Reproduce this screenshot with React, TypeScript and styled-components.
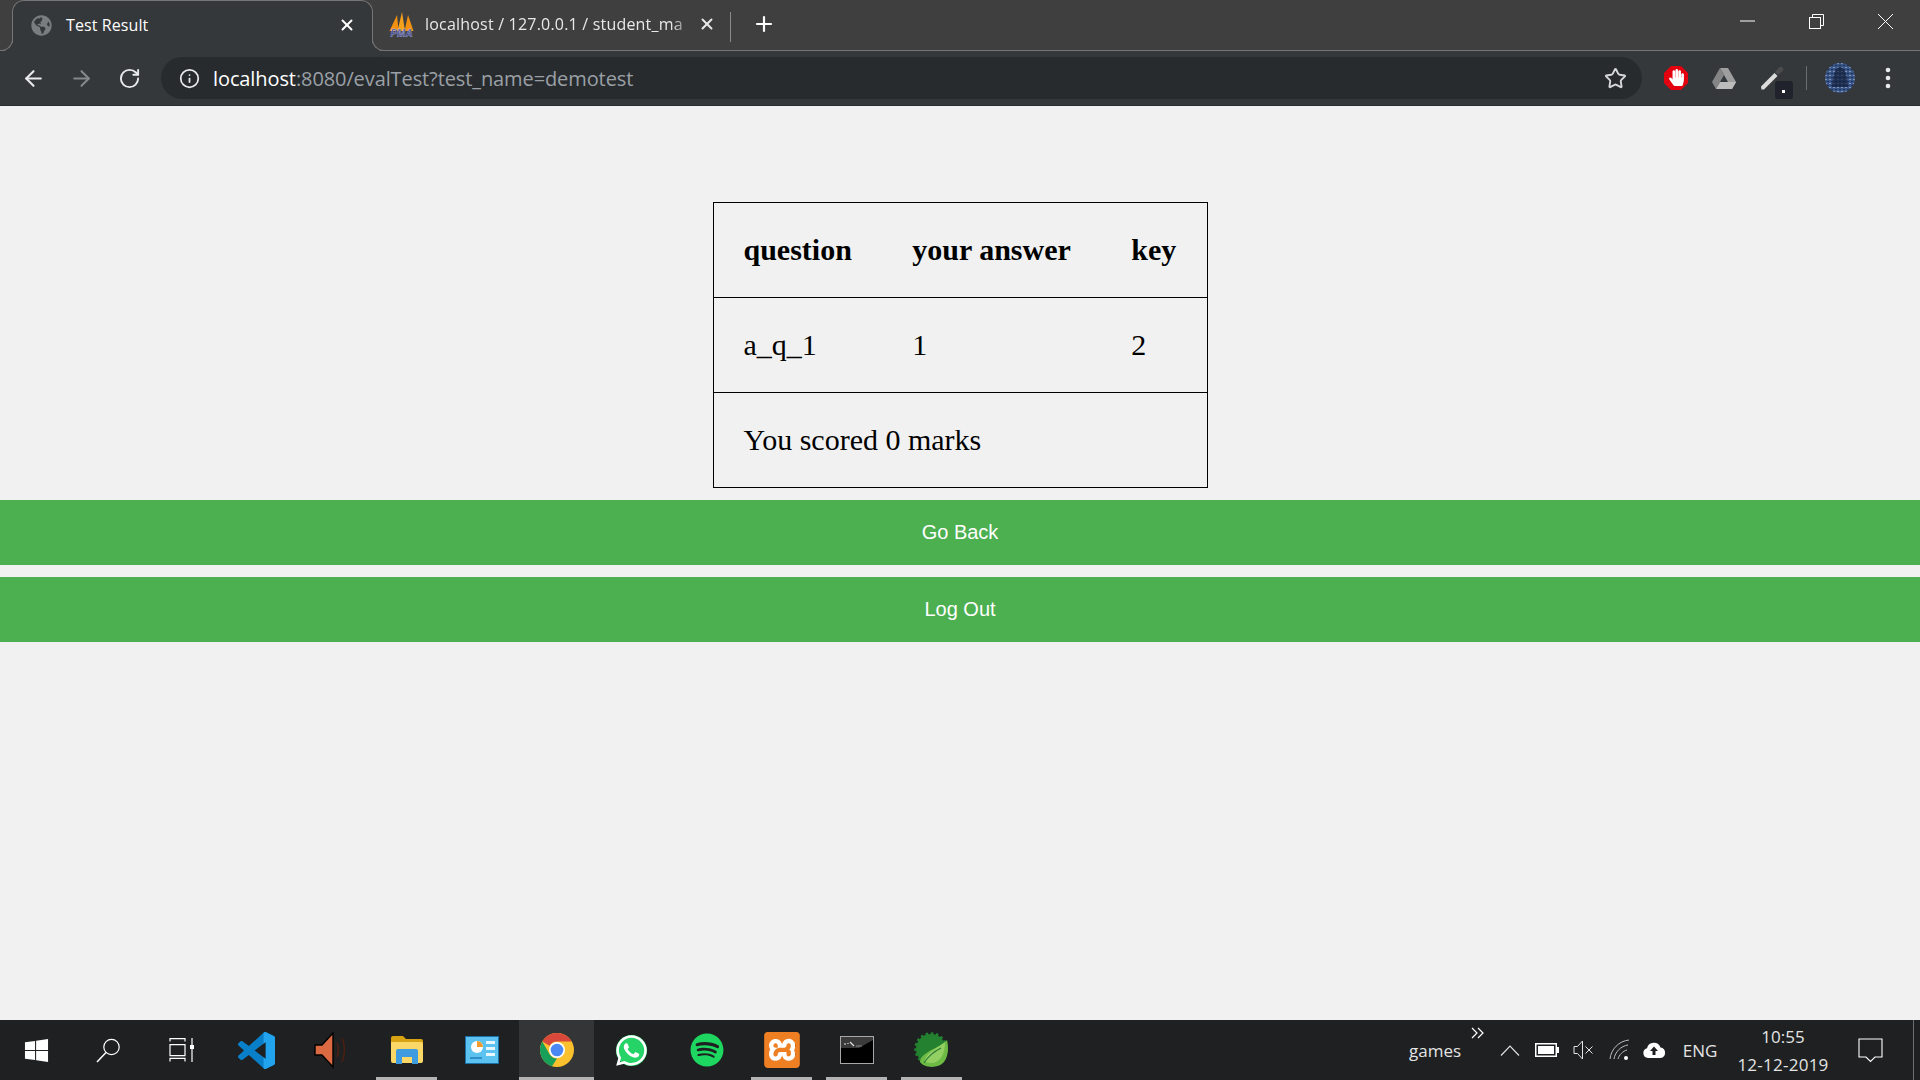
import React from "react";
import styled, { createGlobalStyle } from "styled-components";
import { ArrowLeft, ArrowRight, RotateCw, Info, Star, X, Plus } from "lucide-react";
import { FaHandPaper, FaWhatsapp, FaSpotify, FaGlobeAmericas } from "react-icons/fa";
import { SiXampp } from "react-icons/si";

const GlobalStyle = createGlobalStyle`
  html, body { margin: 0; padding: 0; height: 100%; background: #f1f1f1; }
  * { box-sizing: border-box; }
`;

const Screen = styled.div`
  width: 1920px;
  height: 1080px;
  display: flex;
  flex-direction: column;
  overflow: hidden;
`;

/* browser chrome */
const TabStrip = styled.div`
  height: 51px;
  flex: none;
  display: flex;
  align-items: flex-end;
  padding-left: 12px;
  background: #3f3f3f;
  border-bottom: 1px solid #757575;
  color: #fff;
  font-family: "Open Sans", sans-serif;
  font-size: 16px;
`;

const ActiveTab = styled.div`
  position: relative;
  width: 361px;
  height: 51px;
  margin-bottom: -1px;
  display: flex;
  align-items: center;
  padding: 0 16px 2px 18px;
  background: #35383b;
  border: 1px solid #757575;
  border-bottom: none;
  border-radius: 12px 12px 0 0;

  &::before,
  &::after {
    content: "";
    position: absolute;
    bottom: 0;
    width: 13px;
    height: 13px;
    border-bottom: 1px solid #757575;
  }
  &::before {
    left: -14px;
    border-right: 1px solid #757575;
    border-bottom-right-radius: 12px;
    box-shadow: 6px 6px 0 #35383b;
  }
  &::after {
    right: -14px;
    border-left: 1px solid #757575;
    border-bottom-left-radius: 12px;
    box-shadow: -6px 6px 0 #35383b;
  }
`;

const Tab = styled.div`
  width: 357px;
  height: 50px;
  display: flex;
  align-items: center;
  padding: 0 14px 2px 16px;
  color: #e8e8e8;
`;

const TabTitle = styled.span<{ $fade?: boolean }>`
  flex: 1;
  margin-left: ${(p) => (p.$fade ? 11 : 14)}px;
  white-space: nowrap;
  letter-spacing: ${(p) => (p.$fade ? 0.2 : 0.1)}px;
  ${(p) => p.$fade && "-webkit-mask-image: linear-gradient(90deg, #000 90%, transparent 99%);"}
`;

const TabDivider = styled.div`
  width: 1px;
  height: 30px;
  margin-bottom: 8px;
  background: #8a8a8a;
`;

const NewTab = styled.div`
  width: 66px;
  height: 50px;
  display: flex;
  align-items: center;
  justify-content: center;
  padding-bottom: 2px;
`;

const WindowControls = styled.div`
  margin-left: auto;
  height: 50px;
  display: flex;
  align-items: flex-start;
`;

const WindowButton = styled.div`
  width: 69px;
  height: 42px;
  display: flex;
  align-items: center;
  justify-content: center;
`;

const Toolbar = styled.div`
  height: 55px;
  flex: none;
  display: flex;
  align-items: center;
  background: #35383b;
  border-bottom: 1px solid #2b2d30;
  padding-left: 9px;
`;

const NavButton = styled.div<{ $off?: boolean }>`
  width: 48px;
  height: 42px;
  display: flex;
  align-items: center;
  justify-content: center;
  color: ${(p) => (p.$off ? "#85888b" : "#e8eaed")};
`;

const Omnibox = styled.div`
  width: 1481px;
  margin-right: 10px;
  height: 42px;
  margin-left: 8px;
  display: flex;
  align-items: center;
  padding: 0 15px 0 18px;
  background: #282b2e;
  border-radius: 21px;
  font-family: "Open Sans", sans-serif;
  font-size: 20px;
  color: #9aa0a6;
`;

const Url = styled.div`
  flex: 1;
  margin-left: 13px;
  letter-spacing: -0.1px;
  white-space: nowrap;
`;

const Host = styled.span`
  color: #fff;
`;

const ToolbarSlot = styled.div<{ $w: number }>`
  width: ${(p) => p.$w}px;
  height: 42px;
  flex: none;
  position: relative;
  display: flex;
  align-items: center;
  justify-content: center;
  color: #e8eaed;
`;

const ToolbarDivider = styled.div`
  width: 1px;
  height: 24px;
  background: #6b6e71;
`;

const PickerBadge = styled.div`
  position: absolute;
  right: 3px;
  bottom: 0;
  width: 18px;
  height: 18px;
  border-radius: 3px;
  background: #20232b;
  &::after {
    content: "";
    position: absolute;
    left: 7px;
    top: 9px;
    width: 3px;
    height: 3px;
    background: #fff;
  }
`;

/* page */
const Page = styled.main`
  flex: 1;
  display: flex;
  flex-direction: column;
  align-items: center;
  gap: 12px;
  padding-top: 96px;
  background: #f1f1f1;
`;

const ResultTable = styled.table`
  width: 495px;
  border-collapse: collapse;
  border: 1px solid #000;
  font-family: "Liberation Serif", "Times New Roman", serif;
  font-size: 30px;
  color: #000;
  text-align: left;
`;

const Row = styled.tr`
  height: 95px;
  border-bottom: 1px solid #000;
  &:last-child { border-bottom: none; }
`;

const HeadCell = styled.th`
  padding: 0 30px;
  font-weight: 700;
  white-space: nowrap;
`;

const Cell = styled.td`
  padding: 0 30px;
`;

const WideButton = styled.button`
  width: 100%;
  height: 65px;
  flex: none;
  border: none;
  background: #4caf50;
  color: #fff;
  font-family: "Liberation Sans", Arial, sans-serif;
  font-size: 20px;
`;

/* taskbar */
const Taskbar = styled.footer`
  height: 60px;
  flex: none;
  display: flex;
  background: #1e2022;
`;

const TaskSlot = styled.div<{ $w?: number; $open?: boolean; $active?: boolean }>`
  width: ${(p) => p.$w ?? 75}px;
  flex: none;
  position: relative;
  display: flex;
  align-items: center;
  justify-content: center;
  color: #fff;
  background: ${(p) => (p.$active ? "#333536" : "transparent")};
  ${(p) =>
    p.$open &&
    `&::after {
      content: "";
      position: absolute;
      bottom: 0;
      left: ${p.$active ? 0 : 7}px;
      right: ${p.$active ? 0 : 7}px;
      height: 3px;
      background: #b3b3b3;
    }`}
`;

const WhatsappBadge = styled.div`
  position: relative;
  display: flex;
  &::before {
    content: "";
    position: absolute;
    inset: 2px;
    border-radius: 50%;
    background: #25d366;
  }
  svg { position: relative; }
`;

const XamppBadge = styled.div`
  position: relative;
  display: flex;
  &::before {
    content: "";
    position: absolute;
    inset: 5px;
    background: #fff;
  }
  svg { position: relative; }
`;

const Tray = styled.div`
  margin-left: auto;
  display: flex;
  color: #fff;
  font-family: "Open Sans", sans-serif;
`;

const TraySlot = styled.div<{ $w: number; $top?: boolean }>`
  width: ${(p) => p.$w}px;
  display: flex;
  align-items: ${(p) => (p.$top ? "flex-start" : "center")};
  justify-content: center;
  padding-top: ${(p) => (p.$top ? 7 : 0)}px;
  font-size: 17px;
  color: #e4e4e4;
`;

const Clock = styled.div`
  width: 102px;
  display: flex;
  flex-direction: column;
  align-items: center;
  justify-content: space-between;
  padding: 5px 0 4px;
  font-size: 17px;
  color: #e4e4e4;
`;

const DateText = styled.span`
  letter-spacing: 0.25px;
`;

const ShowDesktop = styled.div`
  width: 14px;
  display: flex;
  justify-content: center;
  &::before {
    content: "";
    width: 1px;
    background: #6d6d6d;
  }
`;

const WindowsLogo = () => (
  <svg width="25" height="25" viewBox="0 0 26 26" fill="#fff">
    <polygon points="1,4.5 11.5,3 11.5,12.4 1,12.4" />
    <polygon points="12.6,2.8 25,1 25,12.4 12.6,12.4" />
    <polygon points="1,13.6 11.5,13.6 11.5,23 1,21.5" />
    <polygon points="12.6,13.6 25,13.6 25,25 12.6,23.2" />
  </svg>
);

const SearchGlass = () => (
  <svg width="25" height="25" viewBox="0 0 25 25" fill="none" stroke="#fff">
    <circle cx="15.5" cy="9" r="7.7" strokeWidth="1.2" />
    <path d="M10 14.5L1 24" strokeWidth="1.5" />
  </svg>
);

const TaskView = () => (
  <svg width="26" height="24" viewBox="0 0 26 24" fill="none" stroke="#fff" strokeWidth="1.2">
    <path d="M1 3.5V.6h15v2.9M1 6.6h15v11H1zM1 23.4v-3h15v3" />
    <path d="M23 0v24" />
    <rect x="21" y="7" width="4" height="4" fill="#fff" stroke="none" />
  </svg>
);

const VS_PATH =
  "M23.15 2.587L18.21.21a1.494 1.494 0 0 0-1.705.29l-9.46 8.63-4.12-3.128a.999.999 0 0 0-1.276.057L.327 7.261A1 1 0 0 0 .326 8.74L3.899 12 .326 15.26a1 1 0 0 0 .001 1.479L1.65 17.94a.999.999 0 0 0 1.276.057l4.12-3.128 9.46 8.63a1.492 1.492 0 0 0 1.704.29l4.942-2.377A1.5 1.5 0 0 0 24 20.06V3.939a1.5 1.5 0 0 0-.85-1.352zm-5.146 14.861L10.826 12l7.178-5.448v10.896z";

const VsCode = () => (
  <svg width="37" height="37" viewBox="0 0 24 24">
    <defs>
      <clipPath id="vsRight">
        <rect x="16.6" y="0" width="8" height="24" />
      </clipPath>
    </defs>
    <path d={VS_PATH} fill="#0a7fc9" />
    <path d={VS_PATH} fill="#22a3ee" clipPath="url(#vsRight)" />
  </svg>
);

const Speaker = () => (
  <svg width="36" height="38" viewBox="0 0 36 38">
    <path d="M1 14h7L19 2v34L8 24H1z" fill="#db6a42" stroke="#000" strokeWidth="1.4" />
    <path d="M23 12q3 7 0 14M28 7q5 12 0 24" fill="none" stroke="#4a2010" strokeWidth="1.6" />
  </svg>
);

const Folder = () => (
  <svg width="34" height="30" viewBox="0 0 34 30">
    <path d="M1 3q0-2 2-2h10l3 3h15q2 0 2 2v4H1z" fill="#d9a213" />
    <path d="M1 7h30q2 0 2 2v17q0 2-2 2H3q-2 0-2-2z" fill="#fbd768" />
    <path d="M6 16q0-2 2-2h18q2 0 2 2v13h-6v-7h-10v7H6z" fill="#3f9be0" />
  </svg>
);

const ControlPanel = () => (
  <svg width="34" height="28" viewBox="0 0 34 28">
    <rect x="0.5" y="0.5" width="33" height="27" fill="#5cc2ef" stroke="#1b6fa8" />
    <circle cx="12" cy="11" r="6" fill="#fff" />
    <path d="M12 11V5a6 6 0 0 1 6 6z" fill="#f39c2e" />
    <rect x="21" y="5" width="9" height="3" fill="#e8f6fd" />
    <rect x="21" y="11" width="9" height="3" fill="#e8f6fd" />
    <rect x="21" y="17" width="9" height="3" fill="#e8f6fd" />
    <rect x="5" y="21" width="12" height="2" fill="#2f8fc9" />
  </svg>
);

const Chrome = () => (
  <svg width="34" height="34" viewBox="0 0 34 34">
    <circle cx="17" cy="17" r="17" fill="#fbc02d" />
    <path d="M17 0A17 17 0 0 1 31.7 8.5H17A8.5 8.5 0 0 0 9.6 12.8L2.3 8.5A17 17 0 0 1 17 0Z" fill="#d9483b" />
    <path d="M2.3 8.5L9.6 21.3A8.5 8.5 0 0 0 17 25.5L12 33.3A17 17 0 0 1 2.3 8.5Z" fill="#189f5a" />
    <circle cx="17" cy="17" r="8" fill="#fff" />
    <circle cx="17" cy="17" r="6.3" fill="#4a89f3" />
  </svg>
);

const CmdWindow = () => (
  <svg width="34" height="28" viewBox="0 0 34 28">
    <rect x="0.5" y="0.5" width="33" height="27" fill="#000" stroke="#a8a8a8" />
    <path d="M1 1h32v3l-14 8H1z" fill="#3a3a3a" />
    <path d="M4 8h2M8 7v1M10 6l4 4" stroke="#ddd" strokeWidth="1.2" />
    <path d="M16 10h6" stroke="#888" />
  </svg>
);

const SpringBoot = () => (
  <svg width="36" height="36" viewBox="0 0 36 36">
    <circle cx="17" cy="17" r="15" fill="#23812f" stroke="#23812f" strokeWidth="3.5" strokeDasharray="2.5 2.5" />
    <path d="M6 30C10 36 24 37 30 30 34 25 35 16 33 8 28 14 20 16 14 20 9 23 6 26 6 30Z" fill="#6dbb45" />
    <path d="M11 29C11 21 22 17 31 10 31 21 27 31 17 31 14 31 12 30 11 29Z" fill="#93cf63" />
    <path d="M10 31C15 23 21 19 27 16" stroke="#2a7d36" strokeWidth="1.2" fill="none" />
  </svg>
);

const OverflowChevrons = () => (
  <svg width="16" height="12" viewBox="0 0 16 12" fill="none" stroke="#fff" strokeWidth="1.2">
    <path d="M1 1l5 5-5 5M7 1l5 5-5 5" />
  </svg>
);

const TrayChevron = () => (
  <svg width="20" height="11" viewBox="0 0 20 11" fill="none" stroke="#e4e4e4" strokeWidth="1.1">
    <path d="M1 10.5L10 1l9 9.5" />
  </svg>
);

const Battery = () => (
  <svg width="24" height="14" viewBox="0 0 24 14">
    <rect x="0.75" y="0.75" width="20.5" height="12.5" fill="none" stroke="#fff" strokeWidth="1.5" />
    <rect x="3" y="3" width="16" height="8" fill="#fff" />
    <rect x="22" y="4" width="2" height="6" fill="#fff" />
  </svg>
);

const MutedSpeaker = () => (
  <svg width="21" height="20" viewBox="0 0 21 20" fill="none" stroke="#e4e4e4" strokeWidth="1">
    <path d="M1 6.5h3.5L9.5 1v18l-5-5.5H1z" />
    <path d="M12.5 6.5l7 7M19.5 6.5l-7 7" />
  </svg>
);

const WifiArcs = () => (
  <svg width="22" height="22" viewBox="0 0 22 22" fill="none" stroke="#bdbdbd" strokeWidth="1">
    <path d="M1 20C2 10 10 2 20 1" />
    <path d="M5 20C6 13 12 7 19 6" />
    <path d="M9 20C10 16 14 12 18 11" />
    <circle cx="17" cy="19" r="2" fill="#fff" stroke="none" />
  </svg>
);

const CloudUp = () => (
  <svg width="24" height="16" viewBox="0 0 24 16">
    <path d="M6 16A5 5 0 0 1 5 6.2 7 7 0 0 1 18.5 5.5 5.3 5.3 0 0 1 18.5 16Z" fill="#fff" />
    <path d="M12 4.5l4 4.5h-2.5v4h-3V9H8z" fill="#1e2022" />
  </svg>
);

const Notifications = () => (
  <svg width="25" height="25" viewBox="0 0 25 25" fill="none" stroke="#fff" strokeWidth="1.1">
    <path d="M1 1h23v18h-7l-4.5 4.5L8 19H1z" />
  </svg>
);

const Pma = () => (
  <svg width="25" height="25" viewBox="0 0 25 25">
    <path d="M0.5 19L8 3l1.5 16z" fill="#f29111" />
    <path d="M8.5 19L13 0l3 19z" fill="#f6a21e" />
    <path d="M15.5 19L19 3l5.5 16z" fill="#f29111" />
    <text x="12.5" y="24.5" textAnchor="middle" fontFamily="Liberation Sans, sans-serif" fontSize="10" fontWeight="700" fontStyle="italic" fill="#39418f" stroke="#cfd3ea" strokeWidth="0.3">PMA</text>
  </svg>
);

const Drive = () => (
  <svg width="24" height="21" viewBox="0 0 24 21">
    <polygon points="8,0 16,0 24,14 20,21 12,7" fill="#9e9e9e" />
    <polygon points="8,0 12,7 4,21 0,14" fill="#858585" />
    <polygon points="8,14 24,14 20,21 4,21" fill="#bcbcbc" />
  </svg>
);

const Dropper = () => (
  <svg width="24" height="24" viewBox="0 0 24 24">
    <path d="M1 20.5L14.5 7l3 3L4 23.5 1.5 23.5z" fill="#dcdcdc" />
    <path d="M15 6l4-4.5a2.4 2.4 0 0 1 3.5 3.5L18 9z" fill="#4c4c4c" />
  </svg>
);

const Avatar = () => (
  <svg width="30" height="30" viewBox="0 0 30 30">
    <defs>
      <pattern id="grid" width="4" height="4" patternUnits="userSpaceOnUse">
        <rect width="4" height="4" fill="#3a5688" />
        <rect width="2" height="1" fill="#7f97bb" />
        <rect y="2" x="2" width="2" height="1" fill="#1d3158" />
      </pattern>
    </defs>
    <circle cx="15" cy="15" r="15" fill="url(#grid)" />
    <path d="M7 24C8 12 10 4 15 4s7 8 8 20z" fill="#14203c" opacity="0.7" />
  </svg>
);

const DotsMenu = () => (
  <svg width="6" height="22" viewBox="0 0 6 22" fill="#e8eaed">
    <circle cx="3" cy="3" r="2.3" />
    <circle cx="3" cy="11" r="2.3" />
    <circle cx="3" cy="19" r="2.3" />
  </svg>
);

const StopHand = () => (
  <svg width="24" height="24" viewBox="0 0 24 24">
    <polygon points="7,0 17,0 24,7 24,17 17,24 7,24 0,17 0,7" fill="#e3000f" />
    <foreignObject x="3.5" y="3" width="18" height="18">
      <FaHandPaper size={17} color="#fff" />
    </foreignObject>
  </svg>
);

const MinimizeGlyph = () => (
  <svg width="15" height="2" viewBox="0 0 15 2" stroke="#fff" strokeWidth="1">
    <path d="M0 1h15" />
  </svg>
);

const RestoreGlyph = () => (
  <svg width="15" height="15" viewBox="0 0 15 15" fill="none" stroke="#fff" strokeWidth="1">
    <rect x="0.5" y="3.5" width="11" height="11" />
    <path d="M3.5 3.5V0.5H14.5V11.5H11.5" />
  </svg>
);

const CloseGlyph = () => (
  <svg width="15" height="15" viewBox="0 0 15 15" stroke="#fff" strokeWidth="1">
    <path d="M0 0l15 15M15 0L0 15" />
  </svg>
);

const App = () => (
  <Screen>
    <GlobalStyle />
    <TabStrip>
      <ActiveTab>
        <FaGlobeAmericas size={21} color="#7a7d80" />
        <TabTitle>Test Result</TabTitle>
        <X size={18} strokeWidth={2.6} />
      </ActiveTab>
      <Tab>
        <Pma />
        <TabTitle $fade>localhost / 127.0.0.1 / student_ma</TabTitle>
        <X size={18} strokeWidth={2.6} />
      </Tab>
      <TabDivider />
      <NewTab>
        <Plus size={24} strokeWidth={2.2} />
      </NewTab>
      <WindowControls>
        <WindowButton>
          <MinimizeGlyph />
        </WindowButton>
        <WindowButton>
          <RestoreGlyph />
        </WindowButton>
        <WindowButton>
          <CloseGlyph />
        </WindowButton>
      </WindowControls>
    </TabStrip>

    <Toolbar>
      <NavButton>
        <ArrowLeft size={25} strokeWidth={2} />
      </NavButton>
      <NavButton $off>
        <ArrowRight size={25} strokeWidth={2} />
      </NavButton>
      <NavButton>
        <RotateCw size={23} strokeWidth={2} />
      </NavButton>
      <Omnibox>
        <Info size={21} strokeWidth={2} color="#e8eaed" />
        <Url>
          <Host>localhost</Host>:8080/evalTest?test_name=demotest
        </Url>
        <Star size={23} strokeWidth={2} color="#d5d7d9" />
      </Omnibox>
      <ToolbarSlot $w={48}>
        <StopHand />
      </ToolbarSlot>
      <ToolbarSlot $w={48}>
        <Drive />
      </ToolbarSlot>
      <ToolbarSlot $w={48}>
        <Dropper />
        <PickerBadge />
      </ToolbarSlot>
      <ToolbarSlot $w={20}>
        <ToolbarDivider />
      </ToolbarSlot>
      <ToolbarSlot $w={48}>
        <Avatar />
      </ToolbarSlot>
      <ToolbarSlot $w={48}>
        <DotsMenu />
      </ToolbarSlot>
    </Toolbar>

    <Page>
      <ResultTable>
        <tbody>
          <Row>
            <HeadCell>question</HeadCell>
            <HeadCell>your answer</HeadCell>
            <HeadCell>key</HeadCell>
          </Row>
          <Row>
            <Cell>a_q_1</Cell>
            <Cell>1</Cell>
            <Cell>2</Cell>
          </Row>
          <Row>
            <Cell colSpan={3}>You scored 0 marks</Cell>
          </Row>
        </tbody>
      </ResultTable>
      <WideButton>Go Back</WideButton>
      <WideButton>Log Out</WideButton>
    </Page>

    <Taskbar>
      <TaskSlot $w={72}>
        <WindowsLogo />
      </TaskSlot>
      <TaskSlot $w={72}>
        <SearchGlass />
      </TaskSlot>
      <TaskSlot $w={75}>
        <TaskView />
      </TaskSlot>
      <TaskSlot>
        <VsCode />
      </TaskSlot>
      <TaskSlot>
        <Speaker />
      </TaskSlot>
      <TaskSlot $open>
        <Folder />
      </TaskSlot>
      <TaskSlot>
        <ControlPanel />
      </TaskSlot>
      <TaskSlot $open $active>
        <Chrome />
      </TaskSlot>
      <TaskSlot>
        <WhatsappBadge>
          <FaWhatsapp size={35} color="#fff" />
        </WhatsappBadge>
      </TaskSlot>
      <TaskSlot>
        <FaSpotify size={34} color="#1ed760" />
      </TaskSlot>
      <TaskSlot $open>
        <XamppBadge>
          <SiXampp size={36} color="#ee7f23" />
        </XamppBadge>
      </TaskSlot>
      <TaskSlot $open>
        <CmdWindow />
      </TaskSlot>
      <TaskSlot $open>
        <SpringBoot />
      </TaskSlot>
      <Tray>
        <TraySlot $w={60}>games</TraySlot>
        <TraySlot $w={27} $top>
          <OverflowChevrons />
        </TraySlot>
        <TraySlot $w={36}>
          <TrayChevron />
        </TraySlot>
        <TraySlot $w={38}>
          <Battery />
        </TraySlot>
        <TraySlot $w={34}>
          <MutedSpeaker />
        </TraySlot>
        <TraySlot $w={40}>
          <WifiArcs />
        </TraySlot>
        <TraySlot $w={28}>
          <CloudUp />
        </TraySlot>
        <TraySlot $w={64}>ENG</TraySlot>
        <Clock>
          <span>10:55</span>
          <DateText>12-12-2019</DateText>
        </Clock>
        <TraySlot $w={72}>
          <Notifications />
        </TraySlot>
        <ShowDesktop />
      </Tray>
    </Taskbar>
  </Screen>
);

export default App;
